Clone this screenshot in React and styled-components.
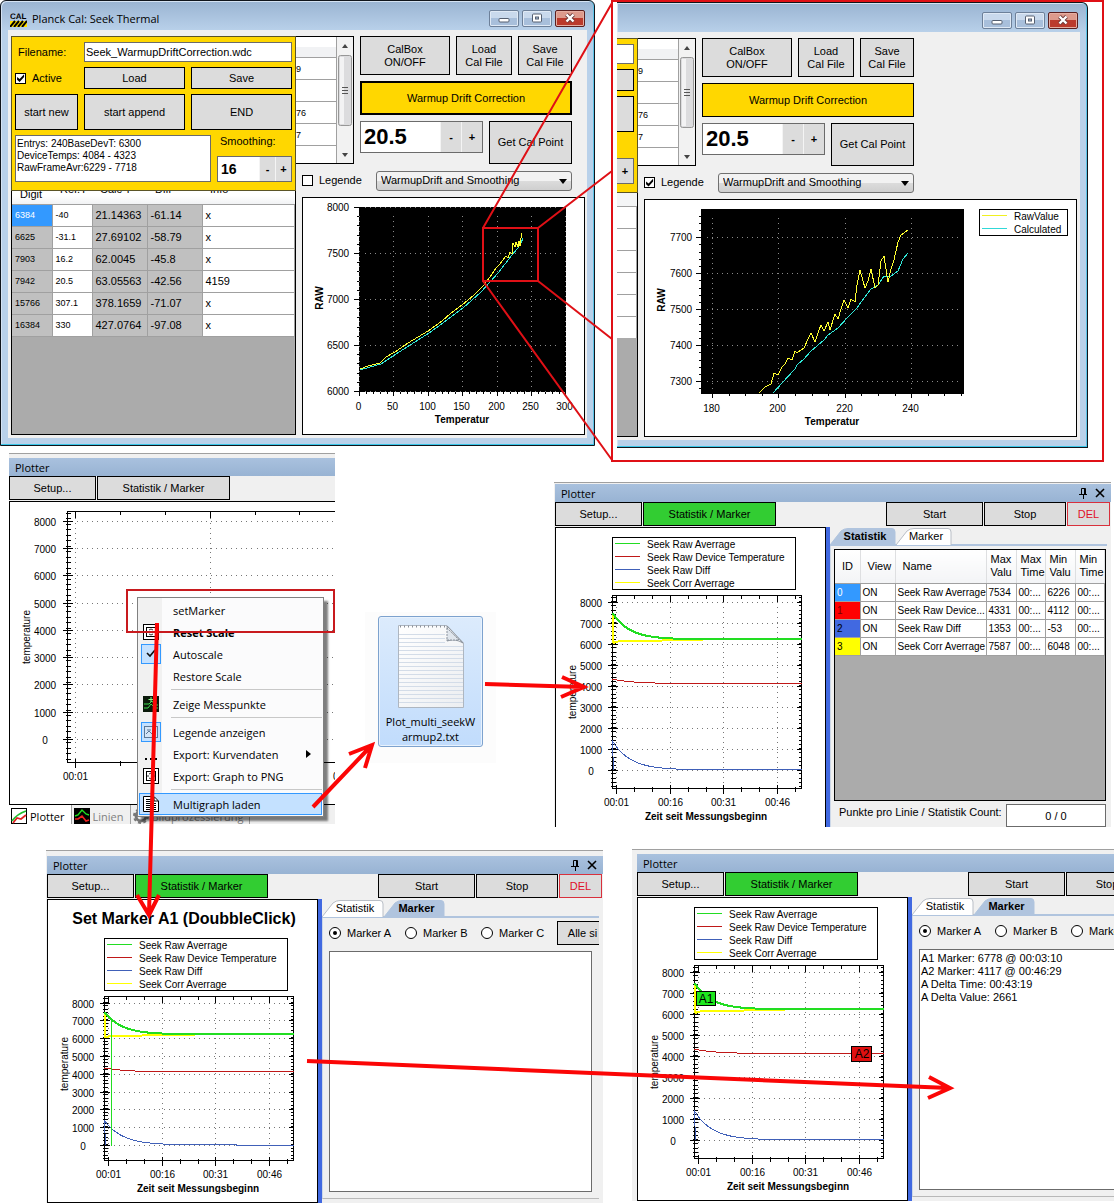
import styled, { createGlobalStyle, css } from "styled-components";

const calPoints = [
  ["6384", "-40", "21.14363", "-61.14", "x"],
  ["6625", "-31.1", "27.69102", "-58.79", "x"],
  ["7903", "16.2", "62.0045", "-45.8", "x"],
  ["7942", "20.5", "63.05563", "-42.56", "4159"],
  ["15766", "307.1", "378.1659", "-71.07", "x"],
  ["16384", "330", "427.0764", "-97.08", "x"],
];

const statistics = [
  { id: "0", color: "#3399ff", text: "#fff", name: "Seek Raw Averrage", max: "7534", min: "6226" },
  { id: "1", color: "#ff0000", text: "#700", name: "Seek Raw Device...", max: "4331", min: "4112" },
  { id: "2", color: "#4169e1", text: "#000", name: "Seek Raw Diff", max: "1353", min: "-53" },
  { id: "3", color: "#ffff00", text: "#000", name: "Seek Corr Averrage", max: "7587", min: "6048" },
];

const series = [
  { name: "Seek Raw Averrage", color: "#22dd22" },
  { name: "Seek Raw Device Temperature", color: "#c01818" },
  { name: "Seek Raw Diff", color: "#4060b8" },
  { name: "Seek Corr Averrage", color: "#ffff00" },
];

const warmupRaw =
  "58,172 66,169 78,166 84,160 93,155 106,146 126,134 140,124 148,117 160,108 172,98 178,92 182,88 188,80 194,71 198,67 201,63 204,59 206,61 208,55 210,57 211,46 213,50 214,45 216,50 217,44 218,49 219,41 220,36";
const warmupCalc =
  "58,173 68,170 79,167 94,157 127,136 141,126 161,111 179,95 189,84 196,76 203,67 210,58 216,51 219,46 221,41";
const zoomRaw =
  "115,194 121,188 127,185 130,174 134,176 138,168 141,165 144,159 148,161 151,152 153,154 157,151 160,149 164,140 167,134 171,143 174,134 177,126 180,132 184,123 186,131 191,115 194,120 197,110 200,101 204,109 207,100 211,103 213,86 216,71 221,89 224,82 227,70 231,89 234,86 237,62 240,57 244,83 247,70 250,61 254,43 257,36 260,34 264,31";
const zoomCalc =
  "129,194 138,184 151,170 153,166 160,160 167,152 180,141 184,136 194,129 204,118 213,109 217,103 227,90 234,86 240,77 247,77 254,72 259,60 264,54";

const range = (from, to, step) => {
  const out = [];
  for (let v = from; v <= to; v += step) out.push(v);
  return out;
};

/* ---------- charts ---------- */

const CalChart = ({ width, left, right, xMajor, xMinor, yMajor, yMinor, raw, calc, titleX, rawX, labelX, legend }) => (
  <ChartSvg viewBox={`1 1 ${width} 236`} height="236" role="img" aria-label="RAW / Temperatur">
    <rect x={left} y="10" width={right - left} height="185" fill="#000" />
    <g stroke="#8a8a8a" strokeDasharray="1 4">
      {xMajor.map(([x], i) => (
        <line key={i} x1={x} x2={x} y1="19" y2="193" />
      ))}
      {yMajor.map(([y], i) => (
        <line key={i} x1={left + 6} x2={right - 6} y1={y} y2={y} />
      ))}
    </g>
    <g stroke="#000">
      {xMajor.map(([x], i) => (
        <line key={i} x1={x} x2={x} y1="195" y2="199" />
      ))}
      {xMinor.map((x, i) => (
        <line key={i} x1={x} x2={x} y1="195" y2="197" />
      ))}
      {yMajor.map(([y], i) => (
        <line key={i} x1={left - 5} x2={left} y1={y} y2={y} />
      ))}
      {yMinor.map((y, i) => (
        <line key={i} x1={left - 2} x2={left} y1={y} y2={y} />
      ))}
    </g>
    <polyline points={calc} fill="none" stroke="#30e8d8" />
    <polyline points={raw} fill="none" stroke="#ffff30" />
    {xMajor.map(([x, label], i) => (
      <AxisText key={i} x={x - 1} y="209">{label}</AxisText>
    ))}
    {yMajor.map(([y, label], i) => (
      <AxisText key={i} x={labelX} y={y}>{label}</AxisText>
    ))}
    <AxisText $bold x={titleX} y="222">Temperatur</AxisText>
    <AxisText $bold x="0" y="0" transform={`translate(${rawX} 101) rotate(-90)`}>RAW</AxisText>
    {legend && (
      <g>
        <rect x="335.5" y="10.5" width="88" height="26" fill="#fff" stroke="#000" />
        <line x1="338" x2="363" y1="16.5" y2="16.5" stroke="#f0f020" />
        <line x1="338" x2="363" y1="29.5" y2="29.5" stroke="#30d8d8" />
        <LegendText x="370" y="17">RawValue</LegendText>
        <LegendText x="370" y="30">Calculated</LegendText>
      </g>
    )}
  </ChartSvg>
);

const SmallCalChart = () => (
  <CalChart
    width={281}
    left={57}
    right={264}
    xMajor={["0", "50", "100", "150", "200", "250", "300"].map((l, i) => [Math.round(57 + i * 34.4) + 0.5, l])}
    xMinor={range(57.5, 264, 6.88)}
    yMajor={["8000", "7500", "7000", "6500", "6000"].map((l, i) => [Math.round(10 + i * 46) + 0.5, l])}
    yMinor={range(10.5, 194, 9.2)}
    raw={warmupRaw}
    calc={warmupCalc}
    titleX={160}
    rawX={17}
    labelX={36}
  />
);

const LargeCalChart = () => (
  <CalChart
    width={431}
    left={57}
    right={320}
    xMajor={["180", "200", "220", "240"].map((l, i) => [Math.round(68 + i * 66.3) + 0.5, l])}
    xMinor={range(68.5, 318, 16.6)}
    yMajor={["7700", "7600", "7500", "7400", "7300"].map((l, i) => [38.5 + i * 36, l])}
    yMinor={range(17, 194, 7.2)}
    raw={zoomRaw}
    calc={zoomCalc}
    titleX={188}
    rawX={17}
    labelX={37}
    legend
  />
);

const PlotAxes = ({ left, right, top, bottom, zero, step, xs, minorX, labelX, labels }) => {
  const values = range(0, 8, 1);
  const minorY = range(top + 2, bottom - 1, step / 5);
  return (
    <g>
      <g stroke="#777" strokeDasharray="1 4">
        {values.map((v) => (
          <line key={v} x1={left + 4} x2={right} y1={zero - v * step} y2={zero - v * step} />
        ))}
        {xs.map((x) => (
          <line key={x} x1={x} x2={x} y1={top + 6} y2={bottom} />
        ))}
      </g>
      <g stroke="#000">
        <rect x={left} y={top} width={right - left} height={bottom - top} fill="none" />
        {minorY.map((y) => (
          <path key={y} d={`M${left - 2} ${y}h5M${right} ${y}h-3`} />
        ))}
        {values.map((v) => (
          <path key={v} d={`M${left - 5} ${zero - v * step}h10M${right} ${zero - v * step}h-5`} />
        ))}
        {minorX.map((x) => (
          <path key={x} d={`M${x} ${bottom - 2}v5M${x} ${top}v3`} />
        ))}
        {xs.map((x) => (
          <path key={x} d={`M${x} ${bottom - 4}v9M${x} ${top}v6`} />
        ))}
      </g>
      {values.map((v) => (
        <AxisText key={v} x={labelX} y={zero - v * step + 1}>{v * 1000}</AxisText>
      ))}
      {xs.map((x, i) => (
        <AxisText key={x} x={x} y={bottom + 14}>{labels[i]}</AxisText>
      ))}
    </g>
  );
};

const TimeChart = ({ top = 68.5, zero = 243.5, step = 21, legendTop = 10, title, probe, markers }) => {
  const left = 57.5;
  const right = 246.5;
  const bottom = 261.5;
  const at = (v) => zero - (v / 1000) * step;
  const curve = (from, to, tau) =>
    range(0, 189, 3)
      .map((x) => `${left + x},${at(to + (from - to) * Math.exp(-x / tau)).toFixed(1)}`)
      .join(" ");
  return (
    <ChartSvg viewBox="1 1 269 302" height="302" role="img" aria-label="temperature">
      {title && <ChartTitle x="137" y="19">{title}</ChartTitle>}
      <rect x={left} y={legendTop + 0.5} width="183" height="52" fill="#fff" stroke="#000" />
      {series.map((s, i) => (
        <g key={s.name}>
          <line x1="60" x2="85" y1={legendTop + 6.5 + i * 13} y2={legendTop + 6.5 + i * 13} stroke={s.color} />
          <LegendText x="92" y={legendTop + 7 + i * 13}>{s.name}</LegendText>
        </g>
      ))}
      <PlotAxes
        left={left}
        right={right}
        top={top}
        bottom={bottom}
        zero={zero}
        step={step}
        xs={[61.5, 115.5, 168.5, 222.5]}
        minorX={[79.5, 97.5, 133.5, 151.5, 186.5, 204.5, 240.5]}
        labelX={36}
        labels={["00:01", "00:16", "00:31", "00:46"]}
      />
      <g fill="none">
        <polyline
          stroke="#ffff00"
          strokeWidth="2"
          points={`${left},${at(7400)} ${left + 1},${at(6080)} ${left + 6},${at(6150)} ${left + 60},${at(6200)} ${left + 90},${at(6230)}`}
        />
        <polyline stroke="#22dd22" strokeWidth="2" points={curve(7500, 6250, 17)} />
        <polyline stroke="#c01818" points={curve(4350, 4140, 20)} />
        <polyline stroke="#4060b8" points={`${left + 1},${at(0)} ${curve(1400, 30, 18)}`} />
        {probe && <line x1="64.5" x2="64.5" y1={at(7000)} y2={at(0)} stroke="#22dd22" />}
      </g>
      {markers && (
        <g>
          <rect x="59.5" y="94.5" width="19" height="14" fill="#1ee81e" stroke="#000" />
          <MarkerText x="69" y="102">A1</MarkerText>
          <rect x="214.5" y="149.5" width="20" height="15" fill="#e01010" stroke="#000" />
          <MarkerText x="225" y="157">A2</MarkerText>
        </g>
      )}
      <AxisText x="0" y="0" transform="translate(17 165) rotate(-90)">temperature</AxisText>
      <AxisText $bold x="151" y="289">Zeit seit Messungsbeginn</AxisText>
    </ChartSvg>
  );
};

const EmptyChart = () => (
  <ChartSvg viewBox="1 1 325 302" height="302" role="img" aria-label="temperature">
    <PlotAxes
      left={58.5}
      right={360.5}
      top={10.5}
      bottom={261.5}
      zero={238.5}
      step={27.3}
      xs={[66.5, 201.5, 336.5]}
      minorX={[111.5, 156.5, 246.5, 290.5]}
      labelX={36}
      labels={["00:01", "", "00:31"]}
    />
    <AxisText x="0" y="0" transform="translate(17 136) rotate(-90)">temperature</AxisText>
  </ChartSvg>
);

/* ---------- Planck Cal window ---------- */

const CaptionButtons = () => (
  <Captions>
    <Caption type="button" aria-label="Minimize">
      <svg width="12" height="12" viewBox="0 0 12 12">
        <rect x="1" y="6.5" width="10" height="3.5" rx="1" fill="#fff" stroke="#555f70" />
      </svg>
    </Caption>
    <Caption type="button" aria-label="Maximize">
      <svg width="12" height="12" viewBox="0 0 12 12">
        <rect x="1.5" y="2" width="9" height="8" rx="1" fill="#fff" stroke="#555f70" />
        <rect x="4.5" y="5" width="3" height="2" fill="#a9c0da" stroke="#555f70" />
      </svg>
    </Caption>
    <Caption type="button" aria-label="Close" $close>
      <svg width="12" height="12" viewBox="0 0 12 12">
        <path d="M2.5 2.5l7 7M9.5 2.5l-7 7" stroke="#6b3a3a" strokeWidth="4" />
        <path d="M2.5 2.5l7 7M9.5 2.5l-7 7" stroke="#fff" strokeWidth="2.4" />
      </svg>
    </Caption>
  </Captions>
);

const Scrollbar = () => (
  <ScrollTrack>
    <svg width="16" height="126" viewBox="0 0 16 126">
      <path d="M5 11l3-4 3 4z" fill="#444" />
      <rect x="1.5" y="18.5" width="13" height="70" rx="2" fill="#dcdcde" stroke="#979797" />
      <rect x="3" y="20" width="4" height="67" fill="#f3f3f4" />
      <path d="M5 50.5h6M5 53.5h6M5 56.5h6" stroke="#555" />
      <path d="M5 116l3 4 3-4z" fill="#444" />
    </svg>
  </ScrollTrack>
);

const Stepper = ({ label, value, large }) => (
  <StepperBox $large={large}>
    <input aria-label={label} defaultValue={value} />
    <button type="button">-</button>
    <button type="button">+</button>
  </StepperBox>
);

const WarmupPanel = () => (
  <YellowPanel>
    <label htmlFor="filename">Filename:</label>
    <FileInput id="filename" defaultValue="Seek_WarmupDriftCorrection.wdc" />
    <CheckLabel>
      <Checkbox type="checkbox" defaultChecked /> Active
    </CheckLabel>
    <FlatButton>Load</FlatButton>
    <FlatButton>Save</FlatButton>
    <FlatButton>start new</FlatButton>
    <FlatButton>start append</FlatButton>
    <FlatButton>END</FlatButton>
    <PanelFoot>
      <InfoBox
        readOnly
        aria-label="Info"
        defaultValue={"Entrys: 240BaseDevT: 6300\nDeviceTemps: 4084 - 4323\nRawFrameAvr:6229 - 7718"}
      />
      <Smoothing>
        <span>Smoothing:</span>
        <Stepper label="Smoothing" value="16" />
      </Smoothing>
    </PanelFoot>
  </YellowPanel>
);

const CalTable = () => (
  <CalGrid>
    <colgroup>
      <col width="40" />
      <col width="40" />
      <col width="55" />
      <col width="55" />
      <col />
    </colgroup>
    <thead>
      <tr>
        <th>Digit</th>
        <th>Ref.T</th>
        <th>Calc T</th>
        <th>Diff</th>
        <th>Info</th>
      </tr>
    </thead>
    <tbody>
      {calPoints.map((row, i) => (
        <tr key={row[0]}>
          {row.map((cell, j) => (
            <CalCell key={j} $selected={i === 0 && j === 0} $gray={j === 0 || j === 2 || j === 3} $small={j < 2}>
              {cell}
            </CalCell>
          ))}
        </tr>
      ))}
    </tbody>
  </CalGrid>
);

const CroppedColumn = () => (
  <>
    <CroppedPanel>
      <CroppedControl $height={20} $white />
      <CroppedControl $height={22} />
      <CroppedControl $height={36} />
      <CroppedStep type="button">+</CroppedStep>
    </CroppedPanel>
    <CroppedRows>
      {calPoints.map((row) => (
        <i key={row[0]} />
      ))}
    </CroppedRows>
  </>
);

const CalWindow = ({ cropped }) => (
  <Window $cropped={cropped}>
    <WindowTitle>
      {!cropped && (
        <>
          <svg width="17" height="17" viewBox="0 0 17 17" aria-hidden="true">
            <LogoText x="0" y="9" textRendering="geometricPrecision">CAL</LogoText>
            <rect y="11" width="17" height="6" fill="#ffe000" />
            <path d="M0 17l5-6M4 17l5-6M8 17l5-6M12 17l5-6" stroke="#000" strokeWidth="2" />
          </svg>
          <h1>Planck Cal: Seek Thermal</h1>
        </>
      )}
      <CaptionButtons />
    </WindowTitle>
    <Client $cropped={cropped}>
      <LeftColumn $cropped={cropped}>
        {cropped ? (
          <CroppedColumn />
        ) : (
          <>
            <WarmupPanel />
            <CalTable />
          </>
        )}
      </LeftColumn>
      <RightColumn>
        <ControlRow>
          <MiniGrid>
            <MiniRows>
              <b />
              <span>9</span>
              <span />
              <span>76</span>
              <span>7</span>
              <span />
            </MiniRows>
            <Scrollbar />
          </MiniGrid>
          <Controls>
            <FlatButton>CalBox<br />ON/OFF</FlatButton>
            <FlatButton>Load<br />Cal File</FlatButton>
            <FlatButton>Save<br />Cal File</FlatButton>
            <WarmupButton $focused={!cropped}>Warmup Drift Correction</WarmupButton>
            <CalPointRow>
              <Stepper label="Temperature" value="20.5" large />
              <FlatButton>Get Cal Point</FlatButton>
            </CalPointRow>
          </Controls>
        </ControlRow>
        <LegendRow>
          <CheckLabel>
            <Checkbox type="checkbox" defaultChecked={cropped} /> Legende
          </CheckLabel>
          <SelectBox>
            <select aria-label="Graph">
              <option>WarmupDrift and Smoothing</option>
            </select>
            <svg width="8" height="5" viewBox="0 0 8 5" aria-hidden="true">
              <path d="M0 0h8L4 5z" />
            </svg>
          </SelectBox>
        </LegendRow>
        <CalChartPanel>{cropped ? <LargeCalChart /> : <SmallCalChart />}</CalChartPanel>
      </RightColumn>
    </Client>
  </Window>
);

/* ---------- plotter windows ---------- */

const TabShape = ({ width, active }) => (
  <svg viewBox={`0 0 ${width} 17`} width={width} height="17" aria-hidden="true">
    <path
      d={`M0 17L11 3Q14 .5 18 .5H${width - 4}Q${width - 1} .5 ${width - 1} 4V17`}
      fill={active ? "#b0c4de" : "#fff"}
      stroke={active ? "#b0c4de" : "#b9bec6"}
    />
  </svg>
);

const Tabs = ({ active }) => (
  <TabStrip>
    {[["Statistik", active === "Statistik" ? 66 : 62], ["Marker", active === "Marker" ? 61 : 56]].map(([name, width]) => (
      <Tab key={name} type="button" $width={width} $active={name === active}>
        <TabShape width={width} active={name === active} />
        <span>{name}</span>
      </Tab>
    ))}
  </TabStrip>
);

const StatisticsPage = () => (
  <TabPage>
    <StatFrame>
      <StatTable>
        <colgroup>
          <col width="25" />
          <col width="35" />
          <col width="91" />
          <col width="30" />
          <col width="29" />
          <col width="30" />
          <col />
        </colgroup>
        <thead>
          <tr>
            <th>ID</th>
            <th>View</th>
            <th>Name</th>
            <th>Max<br />Valu</th>
            <th>Max<br />Time</th>
            <th>Min<br />Valu</th>
            <th>Min<br />Time</th>
          </tr>
        </thead>
        <tbody>
          {statistics.map((s) => (
            <tr key={s.id}>
              <IdCell $color={s.color} $text={s.text}>{s.id}</IdCell>
              <td>ON</td>
              <td>{s.name}</td>
              <td>{s.max}</td>
              <td>00:...</td>
              <td>{s.min}</td>
              <td>00:...</td>
            </tr>
          ))}
        </tbody>
      </StatTable>
    </StatFrame>
    <CountRow>
      <label htmlFor="count">Punkte pro Linie / Statistik Count:</label>
      <input id="count" readOnly defaultValue="0 / 0" />
    </CountRow>
  </TabPage>
);

const MarkerPage = ({ group, text, wide }) => (
  <TabPage $marker>
    <RadioRow>
      {["A", "B", "C"].map((m) => (
        <label key={m}>
          <Radio type="radio" name={group} defaultChecked={m === "A"} />
          Marker {m}
        </label>
      ))}
      {!wide && <AllButton type="button">Alle si</AllButton>}
    </RadioRow>
    <MarkerList readOnly aria-label="Marker" defaultValue={text} $wide={wide} />
  </TabPage>
);

const Plotter = ({ active, del, closable, children, page, edge, strip = 5, noBottom }) => (
  <PlotterBox $edge={edge} $strip={strip}>
    <PlotterTitle>
      <h2>Plotter</h2>
      {closable && (
        <svg width="28" height="12" viewBox="0 0 28 12" aria-hidden="true">
          <path d="M3.5 7V1.5h4V7M6.5 1.5V7M1 7.5h8M5.5 8v4" fill="none" stroke="#000" />
          <path d="M18 2l8 8M26 2l-8 8" stroke="#000" strokeWidth="1.6" />
        </svg>
      )}
    </PlotterTitle>
    <PlotterTools>
      <ToolButton $width={87}>Setup...</ToolButton>
      <ToolButton $width={133} $green={active}>Statistik / Marker</ToolButton>
      {page && (
        <ToolGroup>
          <ToolButton $width={97}>Start</ToolButton>
          <ToolButton $width={82}>Stop</ToolButton>
          {del && <ToolButton $width={43} $danger>DEL</ToolButton>}
        </ToolGroup>
      )}
    </PlotterTools>
    <PlotterBody>
      <PlotPanel $split={!!page} $noBottom={noBottom}>{children}</PlotPanel>
      {page && <Splitter />}
      {page}
    </PlotterBody>
  </PlotterBox>
);

const ScaleIcon = () => (
  <svg width="16" height="16" viewBox="0 0 16 16">
    <rect x=".5" y=".5" width="15" height="15" fill="#fff" stroke="#000" />
    <rect x="3.5" y="3.5" width="9" height="9" fill="none" stroke="#000" />
    <path d="M6 6l2-1 2 1M6 10l2 1 2-1M5 7v2M11 7v2" fill="none" stroke="#333" />
  </svg>
);

const LinesIcon = () => (
  <svg width="16" height="16" viewBox="0 0 16 16">
    <rect width="16" height="16" fill="#000" />
    <path d="M1 8l3-1 4-5 4 4 3 1" fill="none" stroke="#20e020" strokeWidth="1.4" />
    <path d="M1 11h3l4-3 4 5 3-1" fill="none" stroke="#f02020" strokeWidth="1.6" />
  </svg>
);

const PointsIcon = () => (
  <svg width="16" height="16" viewBox="0 0 16 16">
    <rect width="16" height="16" fill="#0a1a0a" />
    <path d="M1 8h5l3-3 3 4h3M1 12h4l3-4 4 4h3" fill="none" stroke="#3fdc4f" />
    <path d="M8 1v5M5.5 3.5h5" stroke="#8f8" />
  </svg>
);

const menuItems = [
  { label: "setMarker" },
  { label: "Reset Scale", bold: true, icon: <ScaleIcon /> },
  {
    label: "Autoscale",
    checked: true,
    icon: (
      <svg width="16" height="16" viewBox="0 0 16 16">
        <path d="M4 7l3 3 5-6" fill="none" stroke="#111" strokeWidth="1.6" />
      </svg>
    ),
  },
  { label: "Restore Scale", line: true },
  { label: "Zeige Messpunkte", line: true, icon: <PointsIcon /> },
  {
    label: "Legende anzeigen",
    checked: true,
    icon: (
      <svg width="16" height="16" viewBox="0 0 16 16">
        <rect x="1.5" y="2.5" width="13" height="11" fill="#d3e5f8" stroke="#5b7796" />
        <path d="M4 6h4M3 10l3-3 3 3 4-3" fill="none" stroke="#5b7796" />
      </svg>
    ),
  },
  {
    label: "Export: Kurvendaten",
    submenu: true,
    icon: (
      <svg width="16" height="16" viewBox="0 0 16 16">
        <path d="M2 13l1-1 1 1-1 1zM7 13l1-1 1 1-1 1zM12 13l1-1 1 1-1 1z" stroke="#000" />
      </svg>
    ),
  },
  { label: "Export: Graph to PNG", line: true, icon: <ScaleIcon /> },
  {
    label: "Multigraph laden",
    selected: true,
    icon: (
      <svg width="16" height="16" viewBox="0 0 16 16">
        <path d="M.5.5H11l4.5 4.5v10.5H.5z" fill="#fff" stroke="#000" />
        <path d="M11 1v4h4M3 3.5h6M3 5.5h6M3 7.5h10M3 9.5h10M3 11.5h10M3 13.5h10" fill="none" stroke="#000" />
      </svg>
    ),
  },
];

const ContextMenu = () => (
  <Menu>
    {menuItems.map((item) => (
      <MenuEntry key={item.label} $line={item.line}>
        <MenuButton type="button" $bold={item.bold} $selected={item.selected}>
          <MenuIcon $checked={item.checked}>{item.icon}</MenuIcon>
          {item.label}
          {item.submenu && (
            <svg width="5" height="8" viewBox="0 0 5 8">
              <path d="M0 0l5 4-5 4z" />
            </svg>
          )}
        </MenuButton>
      </MenuEntry>
    ))}
  </Menu>
);

const DockTabs = () => (
  <DockBar>
    <DockTab type="button" $active>
      <svg width="16" height="16" viewBox="0 0 16 16">
        <rect x=".5" y=".5" width="15" height="15" fill="#fff" stroke="#000" />
        <path d="M1 13Q6 6 15 3" fill="none" stroke="#20c030" strokeWidth="1.8" />
        <path d="M2 15l4-5 4 1 5-4" fill="none" stroke="#e02020" strokeWidth="1.8" />
      </svg>
      Plotter
    </DockTab>
    <DockTab type="button">
      <LinesIcon />
      Linien
    </DockTab>
    <DockTab type="button">
      <svg width="16" height="16" viewBox="0 0 16 16">
        <circle cx="8" cy="8" r="5" fill="none" stroke="#777" strokeWidth="3" />
        <circle cx="8" cy="8" r="7" fill="none" stroke="#777" strokeWidth="2" strokeDasharray="3 2.5" />
      </svg>
      Bildprozessierung
    </DockTab>
  </DockBar>
);

const FileIcon = () => (
  <FileHalo>
    <FileTile>
      <svg width="68" height="86" viewBox="0 0 68 86" aria-hidden="true">
        <defs>
          <linearGradient id="sheet" x1="0" y1="0" x2="1" y2="1">
            <stop offset="0" stopColor="#fff" />
            <stop offset="1" stopColor="#eceef1" />
          </linearGradient>
        </defs>
        <path d="M1.5 2.5H50L66.5 20V84.5H1.5z" fill="url(#sheet)" stroke="#aeb6c0" />
        <path d="M3 3.5H50" stroke="#8a9099" strokeWidth="2" strokeDasharray="1 3" />
        <g stroke="#d3dce8">
          {range(11.5, 82, 4).map((y) => (
            <line key={y} x1="2" x2={y < 21 ? 48 : 66} y1={y} y2={y} />
          ))}
        </g>
        <path d="M50 3Q52 12 50 18Q58 15 66 20z" fill="#f8fafc" stroke="#8a929c" />
        <path d="M50 5v12h12z" fill="#dfe5ec" stroke="#8a929c" strokeDasharray="2 1" />
      </svg>
      <span>Plot_multi_seekW<br />armup2.txt</span>
    </FileTile>
  </FileHalo>
);

/* Frames and arrows that lie over the windows */
const Annotations = () => (
  <Overlay viewBox="0 0 1114 1204" aria-hidden="true">
    <g fill="none" stroke="#df1016" strokeWidth="2">
      <rect x="612" y="1" width="491" height="460" />
      <rect x="483" y="228" width="55" height="53" />
      <path d="M483 228L612 3M538 228L612 171M538 281L612 339M483 281L612 460" />
      <rect x="127" y="590" width="207" height="42" stroke="#c81a1e" />
    </g>
    <g fill="none" stroke="#fb0606" strokeWidth="4">
      <path d="M157 623L149 914M137 895L149 915L159 895" />
      <path d="M313 807L371 746M349 754L372 745L365 768" />
      <path d="M485 684L583 687M562 677L584 687L561 697" />
      <path d="M307 1061L949 1088M929 1077L950 1088L928 1098" />
    </g>
  </Overlay>
);

const App = () => (
  <Board>
    <GlobalStyle />
    <Row>
      <Piece $width={595}>
        <CalWindow />
      </Piece>
      <Piece $left={22} $top={2} $width={471}>
        <CalWindow cropped />
      </Piece>
    </Row>
    <Row $space={5}>
      <Piece $left={9} $width={326}>
        <Plotter>
          <EmptyChart />
        </Plotter>
        <DockTabs />
        <ContextMenu />
      </Piece>
      <Piece $left={30} $top={159} $width={131}>
        <FileIcon />
      </Piece>
      <Piece $left={58} $top={29} $width={557}>
        <Plotter active del closable edge={1} strip={2} noBottom page={<SidePane><Tabs active="Statistik" /><StatisticsPage /></SidePane>}>
          <TimeChart />
        </Plotter>
      </Piece>
    </Row>
    <Row $space={22}>
      <Piece $left={46} $top={1} $width={557}>
        <Plotter active del closable edge={1} strip={6} page={<SidePane><Tabs active="Marker" /><MarkerPage group="left" text="" /></SidePane>}>
          <TimeChart top={97.5} zero={246.5} step={17.8} legendTop={39} title="Set Marker A1 (DoubbleClick)" probe />
        </Plotter>
      </Piece>
      <Piece $left={29} $grow>
        <Plotter
          active
          edge={5}
          page={
            <SidePane $wide>
              <Tabs active="Marker" />
              <MarkerPage
                group="right"
                wide
                text={"A1 Marker: 6778 @ 00:03:10\nA2 Marker: 4117 @ 00:46:29\nA Delta Time: 00:43:19\nA Delta Value: 2661"}
              />
            </SidePane>
          }
        >
          <TimeChart markers />
        </Plotter>
      </Piece>
    </Row>
    <Annotations />
  </Board>
);

const GlobalStyle = createGlobalStyle`
  * {
    box-sizing: border-box;
  }

  body {
    margin: 0;
    background: #fff;
    color: #000;
    font-family: "Liberation Sans", Arial, sans-serif;
    font-size: 11px;
    line-height: 13px;
    overflow-x: hidden;
  }

  button, input, select, textarea {
    font: inherit;
    color: inherit;
    margin: 0;
    padding: 0;
    border-radius: 0;
    outline: none;
  }

  h1, h2 {
    margin: 0;
    font-family: "Open Sans", "Noto Sans", sans-serif;
    font-weight: 400;
    font-size: 11px;
  }
`;

const Board = styled.main`
  position: relative;
  overflow: hidden;
`;

const Row = styled.section`
  display: flex;
  align-items: flex-start;
  margin-top: ${(p) => p.$space || 0}px;
`;

const Piece = styled.div`
  position: relative;
  flex: ${(p) => (p.$grow ? "1 1 0" : `0 0 ${p.$width}px`)};
  min-width: 0;
  margin: ${(p) => p.$top || 0}px 0 0 ${(p) => p.$left || 0}px;
  overflow: hidden;
`;

const Overlay = styled.svg`
  position: absolute;
  top: 0;
  left: 0;
  width: 1114px;
  pointer-events: none;
`;

const ChartSvg = styled.svg`
  display: block;
  width: 100%;
  shape-rendering: crispEdges;
  overflow: hidden;
`;

const AxisText = styled.text`
  font-size: 10px;
  font-weight: ${(p) => (p.$bold ? 700 : 400)};
  text-anchor: middle;
  dominant-baseline: central;
`;

const LegendText = styled.text`
  font-size: 10px;
  dominant-baseline: central;
`;

const LogoText = styled.text`
  font-size: 8px;
  font-weight: 700;
`;

const MarkerText = styled.text`
  font-size: 12px;
  text-anchor: middle;
  dominant-baseline: central;
`;

const ChartTitle = styled.text`
  font-size: 16px;
  font-weight: 700;
  text-anchor: middle;
  dominant-baseline: central;
`;

/* window chrome */

const Window = styled.div`
  border: 1px solid #10151c;
  border-radius: 6px 6px 0 0;
  background: linear-gradient(#9ab4d2, #b9d1ea 30px);
  box-shadow: inset 0 -1px #38c6e8, inset -1px 0 #5cc4e8, inset 1px 1px #d5e3f3;
  padding: 0 7px 7px;

  ${(p) =>
    p.$cropped &&
    css`
      border-left: none;
      border-radius: 0 6px 0 0;
      padding-left: 0;
    `}
`;

const WindowTitle = styled.div`
  height: 29px;
  display: flex;
  align-items: center;
  gap: 5px;
  padding: 5px 2px 0;
`;

const Captions = styled.div`
  display: flex;
  gap: 3px;
  margin-left: auto;
`;

const Caption = styled.button`
  width: 30px;
  height: 17px;
  display: flex;
  align-items: center;
  justify-content: center;
  border: 1px solid #6d8099;
  border-radius: 2px;
  background: linear-gradient(#c9d9ec 50%, #a8bfdb 50%);
  box-shadow: inset 0 0 0 1px #dfe9f5;

  ${(p) =>
    p.$close &&
    css`
      border-color: #5b1f1f;
      background: linear-gradient(#dd9a8c 50%, #bb3a2c 50%);
      box-shadow: inset 0 0 0 1px #e5aea2;
    `}
`;

const Client = styled.div`
  display: flex;
  background: #f0f0f0;
  padding: ${(p) => (p.$cropped ? "6px 3px 3px 0" : "6px 2px 3px 3px")};
`;

const LeftColumn = styled.div`
  width: ${(p) => (p.$cropped ? 21 : 285)}px;
  flex: none;
  border: 1px solid #000;
  border-left-width: ${(p) => (p.$cropped ? 0 : 1)}px;
  background: #ababab;
`;

const YellowPanel = styled.div`
  position: relative;
  z-index: 1;
  margin: -1px -1px 0;
  display: grid;
  grid-template-columns: 63px 101px 101px;
  grid-template-rows: 20px 22px 36px 47px;
  column-gap: 6px;
  row-gap: 5px;
  align-items: stretch;
  padding: 5px 3px 8px;
  background: #ffd700;
  border: 1px solid #5b5426;

  > label {
    align-self: center;
    padding-left: 3px;
  }
`;

const FileInput = styled.input`
  grid-column: span 2;
  min-width: 0;
  border: 1px solid #6b6b6b;
  background: #fff;
  padding: 0 1px;
`;

const FlatButton = styled.button.attrs({ type: "button" })`
  border: 1px solid #000;
  background: #dcdcdc;
`;

const CheckLabel = styled.label`
  display: flex;
  align-items: center;
  gap: 6px;

  ${YellowPanel} > & {
    padding-left: 0;
  }
`;

const Checkbox = styled.input`
  appearance: none;
  width: 11px;
  height: 11px;
  border: 1px solid #000;
  background: #fff;

  &:checked::before {
    content: "";
    display: block;
    width: 9px;
    height: 9px;
    background: #000;
    clip-path: polygon(12% 40%, 40% 62%, 90% 8%, 90% 38%, 40% 95%, 12% 70%);
  }
`;

const PanelFoot = styled.div`
  grid-column: 1 / -1;
  display: flex;
  gap: 6px;
`;

const InfoBox = styled.textarea`
  flex: 0 0 196px;
  border: 1px solid #6b6b6b;
  resize: none;
  padding: 2px 1px;
  font-size: 10px;
  line-height: 12px;
  overflow: hidden;
`;

const Smoothing = styled.div`
  flex: 1;
  min-width: 0;
  display: flex;
  flex-direction: column;
  justify-content: space-between;

  > span {
    padding-left: 3px;
  }
`;

const StepperBox = styled.div`
  display: flex;
  height: ${(p) => (p.$large ? 32 : 26)}px;
  border: 1px solid #6b6b6b;
  background: #fff;

  input {
    flex: 1;
    width: 0;
    min-width: 0;
    border: none;
    background: #fff;
    padding-left: 3px;
    font-weight: 700;
    font-size: ${(p) => (p.$large ? 22 : 14)}px;
  }

  button {
    flex: none;
    width: ${(p) => (p.$large ? 21 : 16)}px;
    border: none;
    border-left: 1px solid #f4f4f4;
    background: #dcdcdc;
    font-weight: 700;
  }
`;

const gridLine = "1px solid #a0a0a0";

const CalGrid = styled.table`
  width: 100%;
  margin-top: -15px;
  table-layout: fixed;
  border-collapse: collapse;

  th {
    height: 28px;
    padding: 0 8px;
    background: linear-gradient(#fff 70%, #f1f2f4);
    border-bottom: ${gridLine};
    font-weight: 400;
    text-align: left;
    white-space: nowrap;
  }

  th:first-child {
    vertical-align: bottom;
    padding-bottom: 3px;
  }
`;

const CalCell = styled.td`
  height: 22px;
  padding: 0 3px;
  border-right: ${gridLine};
  border-bottom: ${gridLine};
  background: ${(p) => (p.$selected ? "#3399ff" : p.$gray ? "#c0c0c0" : "#fff")};
  color: ${(p) => (p.$selected ? "#fff" : "#000")};
  font-size: ${(p) => (p.$small ? 9 : 11)}px;
`;

const CroppedPanel = styled.div`
  height: 155px;
  margin: -1px -1px 0 0;
  background: #ffd700;
  border: 1px solid #5b5426;
  border-left: none;
  padding: 5px 3px 0 0;
  display: flex;
  flex-direction: column;
  gap: 5px;
`;

const CroppedControl = styled.div`
  height: ${(p) => p.$height}px;
  border: 1px solid ${(p) => (p.$white ? "#6b6b6b" : "#000")};
  border-left: none;
  background: ${(p) => (p.$white ? "#fff" : "#dcdcdc")};
`;

const CroppedStep = styled.button`
  height: 26px;
  margin-top: 21px;
  border: 1px solid #6b6b6b;
  border-left: none;
  background: #dcdcdc;
  font-weight: 700;
`;

const CroppedRows = styled.div`
  padding-top: 13px;
  background: #f4f5f6;

  i {
    display: block;
    height: 22px;
    background: #fff;
    border-top: ${gridLine};
    border-right: ${gridLine};
  }
`;

const RightColumn = styled.div`
  flex: 1;
  min-width: 0;
`;

const ControlRow = styled.div`
  display: flex;
  gap: 6px;
  height: 128px;
`;

const MiniGrid = styled.div`
  width: 58px;
  display: flex;
  border: 1px solid #000;
  border-left: none;
  background: #fff;
`;

const MiniRows = styled.div`
  flex: 1;
  border-right: ${gridLine};
  font-size: 9px;
  overflow: hidden;

  b {
    display: block;
    height: 20px;
    background: linear-gradient(#fff 50%, #f1f2f4 50%);
  }

  span {
    display: block;
    height: 22px;
    line-height: 23px;
    border-top: ${gridLine};
  }
`;

const ScrollTrack = styled.div`
  width: 16px;
  background: #f2f2f2;

  svg {
    display: block;
  }
`;

const Controls = styled.div`
  display: grid;
  grid-template-columns: 90px 56px 54px;
  grid-template-rows: 39px 34px 43px;
  gap: 6px;
`;

const WarmupButton = styled.button.attrs({ type: "button" })`
  grid-column: 1 / -1;
  border: ${(p) => (p.$focused ? 2 : 1)}px solid #000;
  background: #ffd700;
`;

const CalPointRow = styled.div`
  grid-column: 1 / -1;
  display: grid;
  grid-template-columns: 123px 83px;
  gap: 6px;
`;

const LegendRow = styled.div`
  display: flex;
  align-items: center;
  height: 33px;
  padding: 0 0 0 6px;

  ${CheckLabel} {
    width: 74px;
  }
`;

const SelectBox = styled.div`
  position: relative;
  width: 196px;

  select {
    appearance: none;
    display: block;
    width: 100%;
    height: 20px;
    padding: 0 4px;
    border: 1px solid #707070;
    border-radius: 3px;
    background: linear-gradient(#f2f2f2 50%, #dcdcdc 50%, #cfcfcf);
  }

  svg {
    position: absolute;
    top: 8px;
    right: 5px;
    pointer-events: none;
  }
`;

const CalChartPanel = styled.div`
  margin-left: 6px;
  border: 1px solid #000;
  background: #fff;
`;

/* plotter */

const PlotterBox = styled.div`
  position: relative;
  background: #f0f0f0;
  border-top: 1px solid #a0a0a0;
  padding: ${(p) => p.$strip - 1}px 0 0 ${(p) => p.$edge || 0}px;
  overflow: hidden;
`;

const PlotterTitle = styled.div`
  height: 18px;
  display: flex;
  align-items: center;
  justify-content: space-between;
  padding: 0 5px 0 6px;
  background: linear-gradient(#a9c1de, #98b3d3);
`;

const PlotterTools = styled.div`
  display: flex;
  gap: 1px;
  height: 24px;
`;

const ToolButton = styled(FlatButton)`
  width: ${(p) => p.$width}px;
  flex: none;
  background: ${(p) => (p.$green ? "#32cd32" : "#dcdcdc")};
  color: ${(p) => (p.$danger ? "#e01028" : "inherit")};
  border-color: ${(p) => (p.$danger ? "#d8303c" : "#000")};
`;

const ToolGroup = styled.div`
  display: flex;
  gap: 1px;
  margin-left: 109px;
`;

const PlotterBody = styled.div`
  display: flex;
  margin-top: 1px;
`;

const PlotPanel = styled.div`
  flex: ${(p) => (p.$split ? "0 0 271px" : "1 1 0")};
  height: ${(p) => (p.$noBottom ? 300 : 304)}px;
  min-width: 0;
  border: 1px solid #000;
  border-bottom-width: ${(p) => (p.$noBottom ? 0 : 1)}px;
  border-right-width: ${(p) => (p.$split ? 1 : 0)}px;
  background: #fff;
  overflow: hidden;
`;

const Splitter = styled.div`
  flex: 0 0 4px;
  background: #4169e1;
`;

const SidePane = styled.div`
  flex: 1;
  min-width: 0;
  display: flex;
  flex-direction: column;
  padding-right: ${(p) => (p.$wide ? 0 : 4)}px;
`;

const TabStrip = styled.div`
  display: flex;
  padding-top: 1px;
  border-bottom: 2px solid #b0c4de;
`;

const Tab = styled.button`
  position: relative;
  width: ${(p) => p.$width}px;
  height: 16px;
  border: none;
  background: none;
  padding-left: 4px;
  font-weight: ${(p) => (p.$active ? 700 : 400)};

  svg {
    position: absolute;
    left: 0;
    top: 0;
  }

  span {
    position: relative;
  }
`;

const TabPage = styled.div`
  flex: 1;
  display: flex;
  flex-direction: column;
  min-height: 0;
  padding: 3px 1px 0 3px;
  border-left: 1px solid #cdd8e8;
  overflow: hidden;

  ${(p) =>
    p.$marker &&
    css`
      padding: 3px 0 6px 6px;
      border-bottom: 1px solid #b8b8b8;
      margin-bottom: 4px;
    `}
`;

const StatFrame = styled.div`
  flex: 1;
  border: 1px solid #000;
  background: #ababab;
  overflow: hidden;
`;

const StatTable = styled.table`
  width: 100%;
  table-layout: fixed;
  border-collapse: collapse;

  th {
    height: 33px;
    padding: 0 0 0 4px;
    background: linear-gradient(#fff, #f3f4f6);
    border-right: 1px solid #dedfe1;
    border-bottom: ${gridLine};
    font-weight: 400;
    text-align: left;
  }

  th:nth-child(-n + 3) {
    padding-left: 7px;
  }

  td {
    height: 18px;
    padding: 0 0 0 2px;
    border-right: ${gridLine};
    border-bottom: ${gridLine};
    background: #fff;
    font-size: 10px;
    white-space: nowrap;
  }
`;

const IdCell = styled.td`
  && {
    background: ${(p) => p.$color};
    color: ${(p) => p.$text};
  }
`;

const CountRow = styled.div`
  display: flex;
  align-items: center;
  justify-content: space-between;
  padding: 3px 0 0 5px;

  label {
    padding-bottom: 6px;
  }

  input {
    width: 100px;
    height: 23px;
    border: 1px solid #6b6b6b;
    text-align: center;
    background: #fff;
  }
`;

const RadioRow = styled.div`
  display: flex;
  align-items: center;
  height: 24px;
  margin-bottom: 6px;

  label {
    flex: 0 0 76px;
    display: flex;
    align-items: center;
    gap: 6px;
    white-space: nowrap;
  }
`;

const Radio = styled.input`
  appearance: none;
  flex: none;
  width: 12px;
  height: 12px;
  && {
    border-radius: 50%;
  }
  border: 1px solid #000;
  background: #fff;

  &:checked::before {
    content: "";
    display: block;
    width: 4px;
    height: 4px;
    margin: 3px;
    border-radius: 50%;
    background: #000;
  }
`;

const AllButton = styled.button`
  flex: 1;
  height: 24px;
  padding-left: 8px;
  border: 1px solid #000;
  border-right: none;
  background: #dcdcdc;
  white-space: nowrap;
`;

const MarkerList = styled.textarea`
  flex: 1;
  resize: none;
  border: 1px solid #6b6b6b;
  border-right-width: ${(p) => (p.$wide ? 0 : 1)}px;
  background: #fff;
  padding: 2px 1px;
  margin-right: ${(p) => (p.$wide ? 0 : 7)}px;
  overflow: hidden;
`;

/* context menu */

const Menu = styled.ul`
  position: absolute;
  top: 144px;
  left: 128px;
  width: 187px;
  margin: 0;
  padding: 1px;
  list-style: none;
  border: 1px solid #808080;
  background: linear-gradient(90deg, #f1f1f1 24px, #fbfbfc 24px);
  box-shadow: 4px 4px 2px rgba(0, 0, 0, 0.5);
  font-family: "Open Sans", "Noto Sans", sans-serif;
`;

const MenuEntry = styled.li`
  ${(p) =>
    p.$line &&
    css`
      padding-bottom: 5px;
      margin-bottom: 1px;
      background: linear-gradient(#c8c8c8, #c8c8c8) 32px 24px / 100% 1px no-repeat;
    `}
`;

const MenuButton = styled.button`
  display: flex;
  align-items: center;
  width: 100%;
  height: 22px;
  padding: 0 10px 0 1px;
  border: 1px solid ${(p) => (p.$selected ? "#3399ff" : "transparent")};
  background: ${(p) => (p.$selected ? "#c4e1ff" : "none")};
  font-weight: ${(p) => (p.$bold ? 700 : 400)};
  text-align: left;

  > svg {
    margin-left: auto;
  }
`;

const MenuIcon = styled.span`
  width: 20px;
  height: 20px;
  flex: none;
  display: flex;
  align-items: center;
  justify-content: center;
  margin-right: 12px;
  border: 1px solid ${(p) => (p.$checked ? "#3399ff" : "transparent")};
  background: ${(p) => (p.$checked ? "#c4e1ff" : "none")};

  svg {
    flex: none;
  }
`;

const DockBar = styled.div`
  display: flex;
  height: 19px;
  overflow: hidden;
  background: #f0f0f0;
`;

const DockTab = styled.button`
  display: flex;
  align-items: center;
  gap: 3px;
  padding: 3px 6px 0 2px;
  border: none;
  border-right: 1px solid #a0a0a0;
  background: ${(p) => (p.$active ? "#fff" : "none")};
  color: ${(p) => (p.$active ? "#000" : "#808080")};
  font-family: "Open Sans", "Noto Sans", sans-serif;
`;

/* desktop file */

const FileHalo = styled.div`
  padding: 4px 13px 16px;
  background: #fcfcfc;
`;

const FileTile = styled.div`
  height: 131px;
  padding-top: 6px;
  display: flex;
  flex-direction: column;
  align-items: center;
  gap: 5px;
  border: 1px solid #7da2ce;
  border-radius: 3px;
  background: linear-gradient(#dcebfc, #c1dcfc);
  box-shadow: inset 0 0 0 1px #e8f2fd;
  font-family: "Open Sans", "Noto Sans", sans-serif;
  line-height: 15px;
  text-align: center;
`;

export default App;
